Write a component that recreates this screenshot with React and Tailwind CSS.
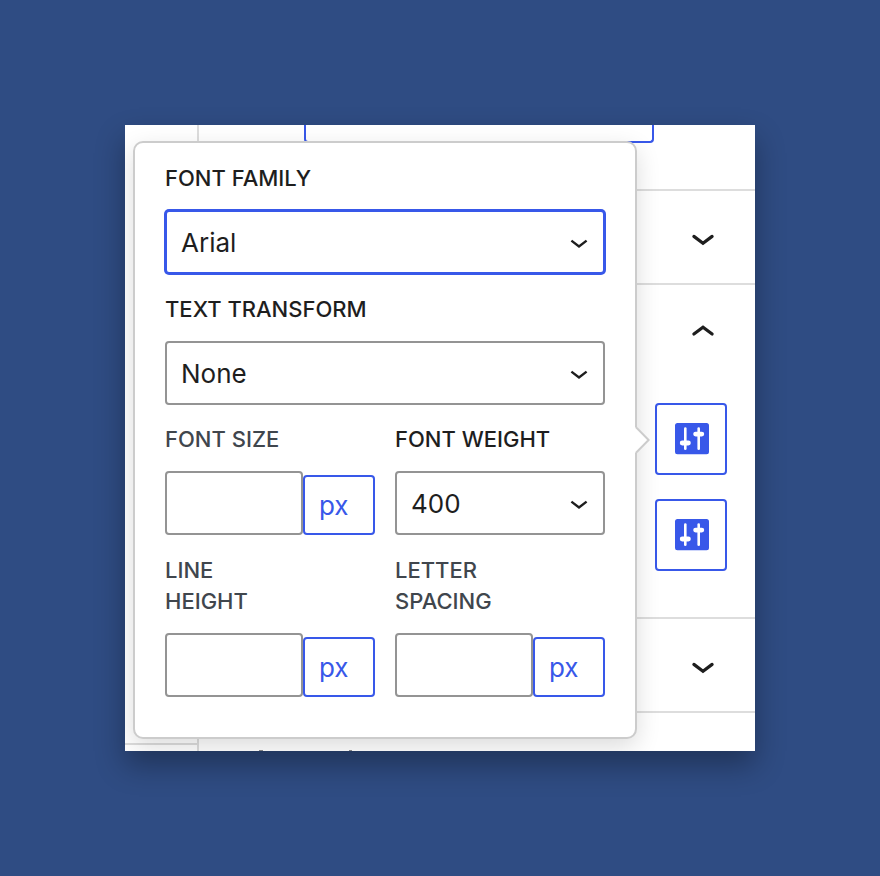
import React from "react";

const control =
  "block h-16 w-full appearance-none rounded border-2 bg-white text-[26px] text-[#1e1e1e] outline-none";

function Chevron({ up = false }) {
  return (
    <svg
      width="48"
      height="48"
      viewBox="0 0 48 48"
      fill="none"
      stroke="#1e1e1e"
      strokeWidth="3.2"
      strokeLinecap="round"
      aria-hidden="true"
    >
      <path d={up ? "M14.9 27L24 20.2l9.1 6.8" : "M14.9 23.4L24 30.2l9.1-6.8"} />
    </svg>
  );
}

function Label({ htmlFor, muted = false, children }) {
  return (
    <label
      htmlFor={htmlFor}
      className={`block text-[22px] leading-[31px] font-medium uppercase ${muted ? "text-[#40464d]" : "text-[#1e1e1e]"}`}
    >
      {children}
    </label>
  );
}

function SelectField({ id, label, options, focused = false }) {
  return (
    <div className="flex flex-col gap-4">
      <Label htmlFor={id}>{label}</Label>
      <div className="relative">
        <select
          id={id}
          className={`${control} px-3.5 ${focused ? "border-[#3858e9] ring-1 ring-[#3858e9]" : "border-[#949494]"}`}
        >
          {options.map((option) => (
            <option key={option}>{option}</option>
          ))}
        </select>
        <svg
          className="pointer-events-none absolute top-1/2 right-2 -translate-y-1/2"
          width="36"
          height="36"
          viewBox="0 0 18 18"
          fill="none"
          stroke="#1e1e1e"
          strokeWidth="1.2"
          aria-hidden="true"
        >
          <path d="M5.2 8.3L9 11.2l3.8-2.9" />
        </svg>
      </div>
    </div>
  );
}

function UnitField({ id, label }) {
  return (
    <div className="flex flex-col gap-4">
      <Label htmlFor={id} muted>
        {label}
      </Label>
      <div className="flex items-end">
        <input id={id} type="text" className={`${control} min-w-0 flex-1 border-[#949494] px-3.5`} />
        <select
          aria-label="Unit"
          className="h-[60px] w-[72px] shrink-0 appearance-none rounded border-2 border-[#3858e9] bg-white px-3.5 text-[26px] text-[#3858e9] outline-none"
        >
          <option>px</option>
          <option>em</option>
          <option>rem</option>
        </select>
      </div>
    </div>
  );
}

function SettingsButton({ label }) {
  return (
    <button
      type="button"
      aria-label={label}
      className="flex size-[72px] items-center justify-center rounded border-2 border-[#3858e9] bg-white"
    >
      <svg width="36" height="36" viewBox="0 0 36 36" aria-hidden="true">
        <rect x="2" y="2" width="34" height="31.2" rx="2.5" fill="#3858e9" />
        <g fill="#fff">
          <rect x="11" y="6.2" width="2.6" height="22.8" rx="1.3" />
          <rect x="6.8" y="19.6" width="11" height="4.8" rx="2.4" />
          <rect x="24.4" y="6.2" width="2.6" height="22.8" rx="1.3" />
          <rect x="20.2" y="10.7" width="11" height="4.8" rx="2.4" />
        </g>
      </svg>
    </button>
  );
}

function Popover() {
  return (
    <div
      role="dialog"
      aria-label="Typography"
      className="absolute top-4 right-[118px] left-2 flex flex-col gap-[19px] rounded-[10px] border-2 border-[#ccc] bg-white px-[30px] pt-5 pb-10 shadow-[0_8px_24px_rgba(0,0,0,0.14)]"
    >
      <div className="flex flex-col gap-5">
        <SelectField id="family" label="Font family" options={["Arial", "Georgia", "Verdana"]} focused />
        <SelectField id="transform" label="Text transform" options={["None", "Uppercase", "Lowercase"]} />
      </div>
      <div className="grid grid-cols-2 gap-5">
        <UnitField id="size" label="Font size" />
        <SelectField id="weight" label="Font weight" options={["400", "500", "700"]} />
        <UnitField id="line-height" label={<>Line<br />height</>} />
        <UnitField id="spacing" label={<>Letter<br />spacing</>} />
      </div>
      <svg
        className="absolute top-1/2 left-full -translate-y-1/2"
        width="16"
        height="28"
        viewBox="0 0 16 28"
        aria-hidden="true"
      >
        <path d="M0 1v26h2L14 14 2 1z" fill="#fff" />
        <path d="M.8 1L13.6 14 .8 27" fill="none" stroke="#ccc" strokeWidth="2" />
      </svg>
    </div>
  );
}

export default function App() {
  return (
    <div className="min-h-screen bg-[#2f4c83] p-[125px] font-['Inter',sans-serif]">
      <main className="relative shadow-[0_14px_28px_rgba(0,0,0,0.32)]">
        <div className="relative flex overflow-hidden bg-white">
          <div className="flex w-[74px] shrink-0 flex-col justify-end border-r-2 border-[#ddd]">
            <div className="h-2 border-t-2 border-[#ddd]" />
          </div>
          <div className="min-w-0 flex-1 divide-y-2 divide-[#ddd]">
            <div className="h-[66px] pr-[101px] pl-[105px]">
              <div className="h-[18px] rounded-b border-2 border-t-0 border-[#3858e9]" />
            </div>
            <div className="flex h-[94px] items-center justify-end pr-7">
              <button type="button" aria-label="Expand section">
                <Chevron />
              </button>
            </div>
            <div className="flex flex-col items-end pr-7 pb-[46px]">
              <div className="flex h-[92px] items-center">
                <button type="button" aria-label="Collapse section">
                  <Chevron up />
                </button>
              </div>
              <div className="flex flex-col gap-6 pt-[26px]">
                <SettingsButton label="Body typography" />
                <SettingsButton label="Heading typography" />
              </div>
            </div>
            <div className="flex h-[94px] items-center justify-end pr-7">
              <button type="button" aria-label="Expand section">
                <Chevron />
              </button>
            </div>
            <div className="flex h-[38px] items-end pl-[60px]">
              <svg width="94" height="1" viewBox="0 0 94 1" fill="#888" aria-hidden="true">
                <path d="M0 0h4v1H0zM90 0h3v1h-3z" />
              </svg>
            </div>
          </div>
          <Popover />
        </div>
      </main>
    </div>
  );
}
